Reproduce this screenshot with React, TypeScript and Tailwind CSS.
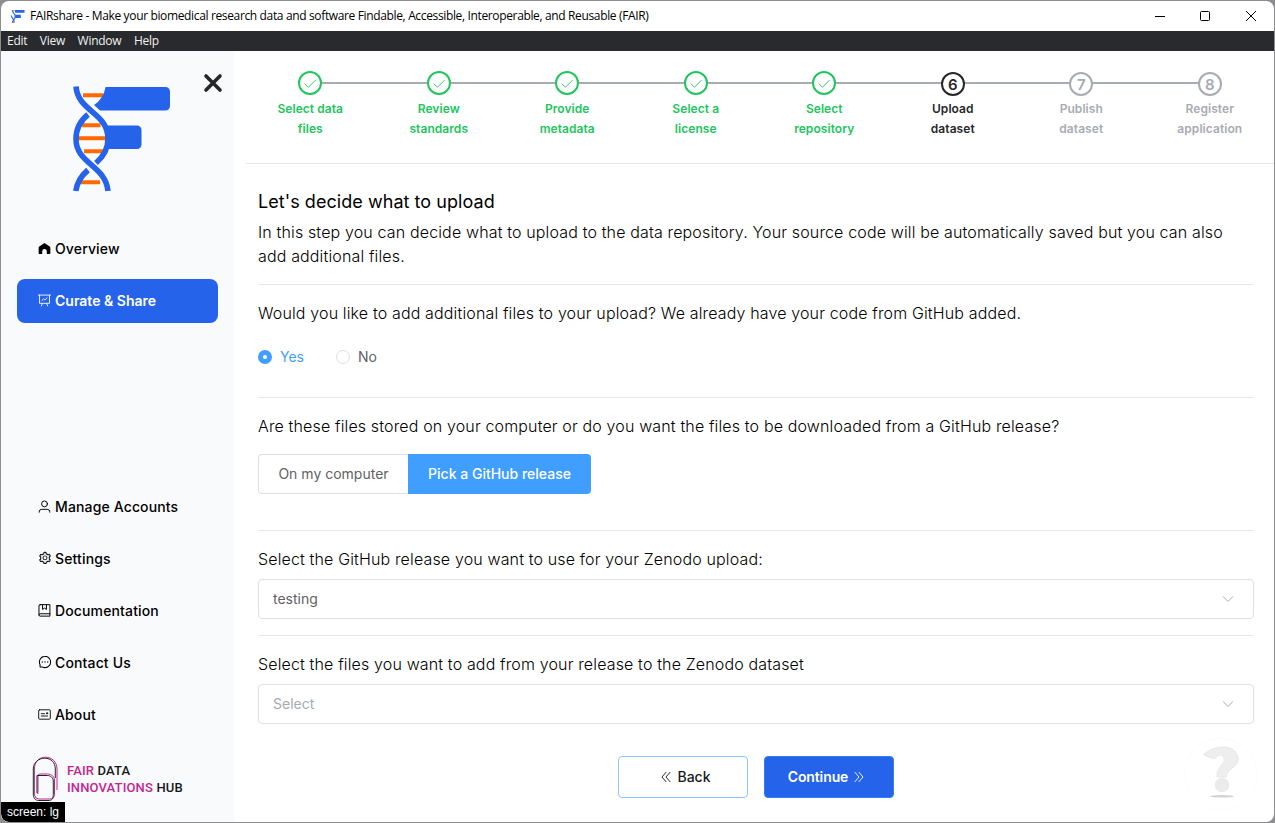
import React from 'react';
import { AiOutlineSetting, AiOutlineMessage } from 'react-icons/ai';

type IconProps = { className?: string };

const stroke = {
  fill: 'none',
  stroke: 'currentColor',
  strokeLinecap: 'round' as const,
  strokeLinejoin: 'round' as const,
};

const HomeIcon = ({ className }: IconProps) => (
  <svg viewBox="0 0 12 12" className={className}>
    <path fill="currentColor" d="M6 .9 1.200 4.200Q.6 4.700.6 5.500v4.900q0 .7.7.7h2.600V8.500a2.100 2.100 0 0 1 4.200 0v2.600h2.600q.7 0 .7-.7V5.500q0-.8-.6-1.300Z" />
  </svg>
);

const BoardIcon = ({ className }: IconProps) => (
  <svg viewBox="0 0 12 12" className={className} {...stroke} strokeWidth={0.8}>
    <path d="M.4 1h11.2M1.4 1v7.6h9.2V1M4 8.8l-.9 2.3M8 8.8l.9 2.3M3.6 6l1.6-1.5 1.2 1 2-1.9" />
  </svg>
);

const UserIcon = ({ className }: IconProps) => (
  <svg viewBox="0 0 12 12" className={className} {...stroke} strokeWidth={0.9}>
    <circle cx="6" cy="3.6" r="2.700" />
    <path d="M1.100 11.300V11a2.400 2.400 0 0 1 2.400-2.400h5a2.400 2.400 0 0 1 2.400 2.400v.3" />
  </svg>
);

const BookIcon = ({ className }: IconProps) => (
  <svg viewBox="0 0 12 12" className={className} {...stroke} strokeWidth={0.9}>
    <path d="M2 .6h9v10.600H2A1.100 1.100 0 0 1 .9 10.100V1.700A1.100 1.100 0 0 1 2 .6ZM.9 10A1 1 0 0 1 1.900 9H11M4.200.8v4.200L6 3.800 7.800 5V.8" />
  </svg>
);

const CardIcon = ({ className }: IconProps) => (
  <svg viewBox="0 0 13 13" className={className} {...stroke} strokeWidth={0.9}>
    <rect x="0.7" y="1.8" width="11.600" height="9.400" rx="0.8" />
    <path d="M3.300 5.700h3.200M3.300 8h6.200M8.400 5.300h1.400M9.100 4.600v1.400" />
  </svg>
);

const ChevronDown = ({ className }: IconProps) => (
  <svg viewBox="0 0 14 14" className={className} {...stroke} strokeWidth={1}>
    <path d="m2.300 4.600 4.700 4.900 4.700-4.900" />
  </svg>
);

const DoubleLeft = ({ className }: IconProps) => (
  <svg viewBox="0 0 14 14" className={className} {...stroke} strokeWidth={0.9}>
    <path d="M7 2.300 3 7l4 4.700M11 2.300 7 7l4 4.700" />
  </svg>
);

const CheckIcon = ({ className }: IconProps) => (
  <svg viewBox="0 0 14 14" className={className} {...stroke} strokeWidth={0.9}>
    <path d="m2 7.900 3.400 3.400 7-7" />
  </svg>
);

const FairshareLogo = ({ className }: IconProps) => (
  <svg viewBox="0 0 98 106" className={className}>
    <g stroke="#ff6a00" strokeWidth="4">
      <path d="M10 9.300h20M9 39.300h18.500M5 52.300h29M11 65.200h20M8 96.200h19" />
    </g>
    <path fill="#2563eb" d="M32.500 1H92.500a4.500 4.500 0 0 1 4.500 4.500v14.500A4.500 4.500 0 0 1 92.500 24.500H27l-6-5.500C27 15 31 9 32.500 1Z" />
    <path fill="#2563eb" d="M33 39.500h31A4.500 4.500 0 0 1 68.500 44v14.500a4.500 4.500 0 0 1-4.500 4.500H33Z" />
    <g fill="none" stroke="#2563eb" strokeWidth="5.600">
      <path d="M15 28.500C7 35 3 43 3 53c0 25 29.500 26 32 52" />
      <path d="M3 .5C5 26 35 26 35 53c0 10-4 17-12 24M15 84C8 90 4 96 2.800 105" />
    </g>
  </svg>
);

const HubLogo = ({ className }: IconProps) => (
  <svg viewBox="0 0 26 46" className={className} fill="none" strokeWidth="1">
    <path stroke="#c4268f" d="M2.400 39V13C2.400 6 7 1.200 13.500 1.200S25 6 25 13v21M6 36V20q0-2 2-2h7.500c4.500 0 7 3 7 6v14c0 3.500-2 5-5 5H7q-3.500 0-4.600-4" />
    <path stroke="#242428" d="M23.300 22v-9C23.300 6.500 19 2.200 12.800 2.200S1.300 6.500 1.300 13v25c0 4 2 6.500 5.500 6.500H16c4.500 0 5.300-2 5.300-6V25c0-3-2.500-5.500-6-5.500H5V37h1.500" />
  </svg>
);

const SIDE_ITEM = 'flex h-[52px] items-center gap-1 pl-[37px] text-[14px] font-medium tracking-[0.14px] text-black';

const labels: [string, string][] = [
  ['Select data', 'files'],
  ['Review', 'standards'],
  ['Provide', 'metadata'],
  ['Select a', 'license'],
  ['Select', 'repository'],
  ['Upload', 'dataset'],
  ['Publish', 'dataset'],
  ['Register', 'application'],
];

function Step({ index }: { index: number }) {
  const done = index < 5;
  const current = index === 5;
  const tone = done ? 'text-[#22c55e]' : current ? 'text-[#27272a]' : 'text-[#a8abb2]';
  return (
    <li className={`flex flex-1 flex-col ${tone}`}>
      <div className="flex h-[26px] items-start">
        <span className={`mt-[11px] h-[2px] flex-1 ${index === 0 ? 'bg-transparent' : 'bg-[#a8abb2]'}`} />
        <span
          className={`flex size-6 items-center justify-center rounded-full border-2 border-current text-[15px] font-semibold leading-none ${done ? '' : 'mt-px'}`}
        >
          {done ? <CheckIcon className="size-[14px]" /> : index + 1}
        </span>
        <span className={`mt-[11px] h-[2px] flex-1 ${index === 7 ? 'bg-transparent' : 'bg-[#a8abb2]'}`} />
      </div>
      <div className="mt-[2px] text-center text-[12px] font-semibold leading-5 tracking-[0.06px]">
        {labels[index][0]}
        <br />
        {labels[index][1]}
      </div>
    </li>
  );
}

function Sidebar() {
  return (
    <aside className="flex w-[233px] shrink-0 flex-col bg-[#f9fafc]">
      <div className="flex h-[171px] shrink-0 items-start pt-[22px]">
        <FairshareLogo className="mt-[13px] ml-[72px] h-[106px] w-[98px]" />
        <svg viewBox="0 0 20 20" className="ml-[32px] size-5" stroke="#27272a" strokeWidth="3.600" strokeLinecap="round">
          <path d="m3 3 14 14M17 3 3 17" />
        </svg>
      </div>
      <nav className="flex h-[518px] shrink-0 flex-col">
        <a className={SIDE_ITEM}><HomeIcon className="size-[13px]" />Overview</a>
        <a className="mx-4 mt-[5px] flex h-11 w-[201px] items-center gap-1 rounded-lg bg-[#2563eb] pb-px pl-[21px] text-[14px] font-semibold text-white">
          <BoardIcon className="size-[13px]" />Curate &amp; Share
        </a>
        <div className="mt-auto">
          <a className={SIDE_ITEM}><UserIcon className="size-[13px]" />Manage Accounts</a>
          <a className={SIDE_ITEM}><AiOutlineSetting className="mr-[-1px] size-[14px]" />Settings</a>
          <a className={SIDE_ITEM}><BookIcon className="size-[13px]" />Documentation</a>
          <a className={SIDE_ITEM}><AiOutlineMessage className="mr-[-1px] size-[14px]" />Contact Us</a>
          <a className={SIDE_ITEM}><CardIcon className="size-[13px]" />About</a>
        </div>
      </nav>
      <div className="flex h-[62px] shrink-0 pt-[16px] pl-[31px]">
        <HubLogo className="h-[46px] w-[26px]" />
        <div className="ml-[9px] pt-[6px] font-['Roboto'] text-[13px] leading-[17px] font-medium tracking-[0.150px] text-[#18181b]">
          <div><span className="text-[#c4268f]">FAIR</span> DATA</div>
          <div className="whitespace-nowrap"><span className="text-[#c4268f]">INNOVATIONS</span> HUB</div>
        </div>
      </div>
      <div className="z-10 flex h-[20px] w-16 shrink-0 items-center justify-center rounded-bl-lg bg-black font-['Liberation_Sans'] text-[12px] whitespace-nowrap text-white">screen: lg</div>
    </aside>
  );
}

function SelectBox({ text, muted }: { text: string; muted?: boolean }) {
  return (
    <div className="flex h-10 items-center justify-between rounded-[4px] border border-[#dcdfe6] pr-[18px] pl-[14px] text-[14px]">
      <span className={`pb-[2px] ${muted ? 'text-[#a8abb2]' : 'text-[#606266]'}`}>{text}</span>
      <ChevronDown className="size-[14px] text-[#a8abb2]" />
    </div>
  );
}

const QUESTION = 'text-[16px] leading-6 font-light tracking-[0.145px] text-black';

export default function App() {
  return (
    <div className="h-[823px] w-[1275px] overflow-hidden bg-[#8e8e91] p-px font-['Inter',sans-serif]">
      <div className="flex h-[821px] w-[1273px] flex-col overflow-hidden rounded-lg bg-white">
        <header className="flex h-[30px] shrink-0 items-center pl-[9px]">
          <svg viewBox="0 0 15 16" className="size-[15px]">
            <path d="M2 1c0 4 3 3 3 7S2 11 2 15M1 7c0 3 3 3 3 7" fill="none" stroke="#2563eb" strokeWidth="1.200" />
            <path fill="#2563eb" d="M4.500 1H15v3H5ZM5 6h6v3.500H5Z" />
            <path d="M1.500 14.200h3M2 1.700h2" stroke="#ff6a00" />
          </svg>
          <span className="ml-[5px] font-['Open_Sans'] text-[12px] tracking-[-0.355px] whitespace-nowrap text-black">
            FAIRshare - Make your biomedical research data and software Findable, Accessible, Interoperable, and Reusable (FAIR)
          </span>
          <div className="mr-[18px] ml-auto flex items-center">
            <svg viewBox="0 0 10 10" className="size-[10px]" stroke="#000"><path d="M0 5.500h10" /></svg>
            <svg viewBox="0 0 10 10" className="ml-[35px] size-[10px] overflow-visible" fill="none" stroke="#000"><rect x=".5" y=".5" width="9" height="9" rx="1" /></svg>
            <svg viewBox="0 0 10 10" className="ml-[36px] size-[10px] overflow-visible" stroke="#000"><path d="m0 0 10 10M10 0 0 10" /></svg>
          </div>
        </header>
        <div className="flex h-5 shrink-0 items-center gap-[12.500px] bg-[#292a2d] pl-[6px] font-['Open_Sans'] text-[12px] tracking-[-0.250px] text-[#f0f0f0]">
          <span>Edit</span><span>View</span><span>Window</span><span>Help</span>
        </div>
        <div className="flex min-h-0 flex-1">
          <Sidebar />
          <main className="flex min-w-0 flex-1 flex-col pl-3">
            <ol className="flex h-[113px] shrink-0 border-b border-[#e5e7eb] pt-5">
              {labels.map((_, i) => <Step key={i} index={i} />)}
            </ol>
            <section className="flex flex-col pr-5 pl-3">
              <h1 className="mt-6 text-[18px] leading-7 font-normal tracking-[0.050px] text-black">Let's decide what to upload</h1>
              <p className={`mt-[4px] whitespace-nowrap ${QUESTION}`}>
                In this step you can decide what to upload to the data repository. Your source code will be automatically saved but you can also
                <br />
                add additional files.
              </p>
              <hr className="mt-4 border-[#e5e7eb]" />
              <p className={`mt-4 ${QUESTION}`}>Would you like to add additional files to your upload? We already have your code from GitHub added.</p>
              <div className="mt-[12px] flex h-10 items-center text-[14px]">
                <span className="flex size-[14px] items-center justify-center rounded-full bg-[#409eff]"><i className="size-1 rounded-full bg-white" /></span>
                <span className="ml-2 w-[56px] pb-[2px] text-[#409eff]">Yes</span>
                <span className="size-[14px] rounded-full border border-[#dcdfe6]" />
                <span className="ml-2 pb-[2px] text-[#606266]">No</span>
              </div>
              <hr className="mt-5 border-[#e5e7eb]" />
              <p className={`mt-4 ${QUESTION}`}>Are these files stored on your computer or do you want the files to be downloaded from a GitHub release?</p>
              <div className="mt-4 flex h-10 text-[14px]">
                <span className="flex w-[150px] items-center justify-center rounded-l-[4px] border border-r-0 border-[#dcdfe6] pb-px text-[#606266]">On my computer</span>
                <span className="flex w-[183px] items-center justify-center rounded-r-[4px] bg-[#409eff] pb-px font-medium text-white">Pick a GitHub release</span>
              </div>
              <hr className="mt-9 border-[#e5e7eb]" />
              <p className={`mt-4 mb-2 ${QUESTION}`}>Select the GitHub release you want to use for your Zenodo upload:</p>
              <SelectBox text="testing" />
              <hr className="mt-4 border-[#e5e7eb]" />
              <p className={`mt-4 mb-2 ${QUESTION}`}>Select the files you want to add from your release to the Zenodo dataset</p>
              <SelectBox text="Select" muted />
              <div className="mt-[18px] flex items-start">
                <button className="mt-[14px] ml-[360px] flex h-[42px] w-[130px] items-center justify-center gap-[4px] rounded-[4px] border border-[#8cc5ff] pb-px pl-[4px] text-[14px] font-medium text-[#18181b]">
                  <DoubleLeft className="size-[14px]" />Back
                </button>
                <button className="mt-[14px] ml-4 flex h-[42px] w-[130px] items-center justify-center gap-[4px] rounded-[4px] border border-[#337ef0] bg-[#2563eb] pr-[4px] pb-px text-[14px] font-semibold tracking-[-0.1px] text-white">
                  Continue<DoubleLeft className="size-[14px] rotate-180" />
                </button>
                <svg viewBox="0 0 74 74" className="mr-[-5px] ml-auto size-[74px] overflow-visible">
                  <circle cx="36" cy="32" r="36" fill="none" stroke="#fcfcfc" />
                  <path d="M18.500 13C27 3 50 1 53 15c2 10-11 11-12 20H32c-1-10 9-13 7-19-1-4-6-4-9.500 1Z" fill="#eeeeee" stroke="#dedede" strokeWidth=".6" strokeLinejoin="round" />
                  <circle cx="37" cy="43" r="6.700" fill="#ebebeb" stroke="#dedede" strokeWidth=".6" />
                  <ellipse cx="37" cy="54.300" rx="12" ry="1.200" fill="#d2d2d2" />
                </svg>
              </div>
            </section>
          </main>
        </div>
      </div>
    </div>
  );
}
